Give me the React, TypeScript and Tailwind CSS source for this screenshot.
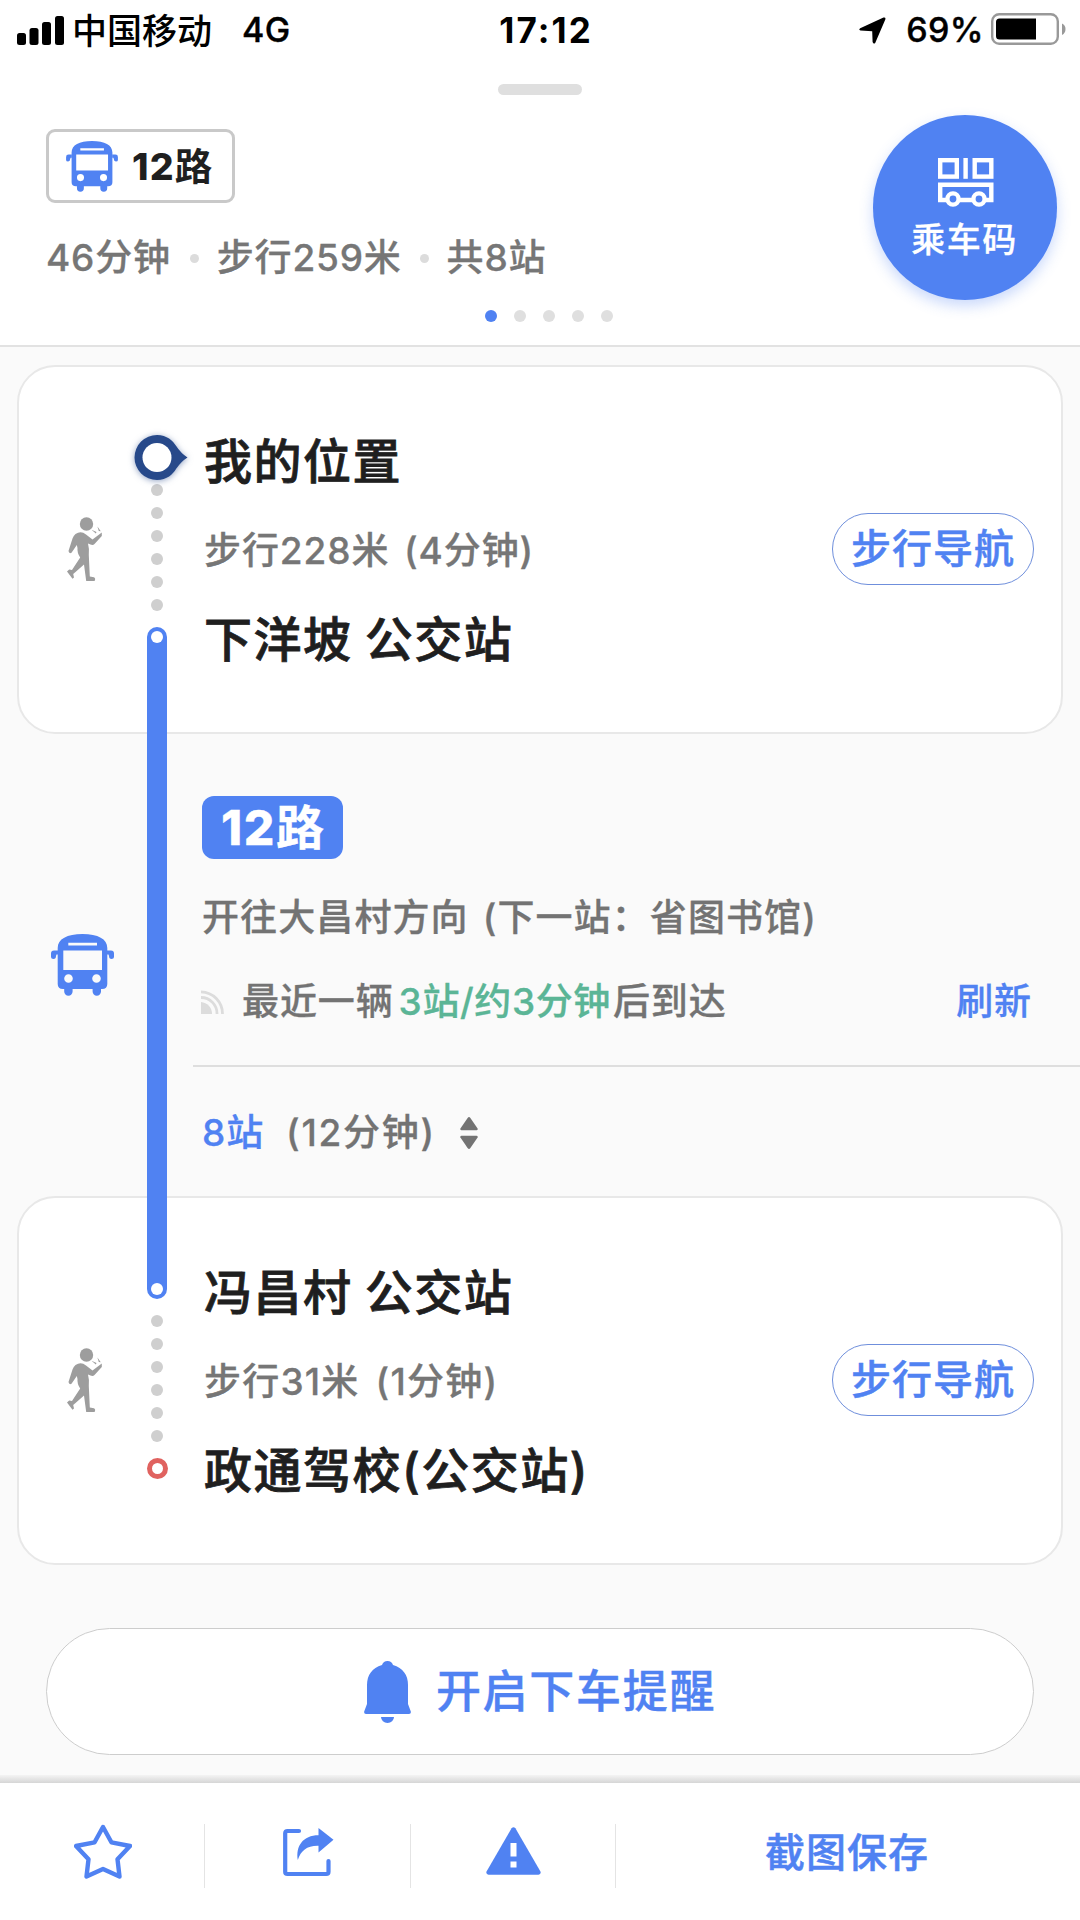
import { clsx } from "clsx";

function BusIcon({ className }: { className?: string }) {
  return (
    <svg viewBox="0 0 63 62" className={clsx("shrink-0 fill-[#5082f2]", className)}>
      <path
        fillRule="evenodd"
        d="M6.7 14 C6.7 5 16 0 31.5 0 C47 0 56.3 5 56.3 14 V50 Q56.3 55 51 55 H50 V57.5 A4.2 4.2 0 0 1 41.6 57.5 V55 H21.6 V57.5 A4.2 4.2 0 0 1 13.2 57.5 V55 H12 Q6.7 55 6.7 50 Z M17.3 8.8 V11.6 H46 V8.8 Z M12.3 16.5 V36 H51 V16.5 Z M17.5 40.2 A4.3 4.3 0 1 0 17.5 48.8 A4.3 4.3 0 1 0 17.5 40.2 Z M45.5 40.2 A4.3 4.3 0 1 0 45.5 48.8 A4.3 4.3 0 1 0 45.5 40.2 Z"
      />
      <path d="M7 16.5 H3 Q0 16.5 0 19.5 V23 Q0 25 2.5 25 Q5 25 5 22 L5.5 20.5 H7 Z" />
      <path d="M56 16.5 H60 Q63 16.5 63 19.5 V23 Q63 25 60.5 25 Q58 25 58 22 L57.5 20.5 H56 Z" />
    </svg>
  );
}

function WalkIcon() {
  return (
    <svg viewBox="0 0 36 65" className="w-9 h-[65px] mt-[150px] ml-12 shrink-0 fill-[#9d9d9d]">
      <circle cx="19.5" cy="7" r="6.7" />
      <path d="M8.5 17 Q14 13.5 19 17.5 L25.5 22.5 L34.8 15.5 V19 L27.5 27 Q26 28.5 23.5 27.5 L21 26.5 Q22.5 32 21.8 38 L22.8 59.5 L27 60.2 Q29 61.5 27.5 64 H19.2 L17 47.5 L8.5 55 L6.2 57 L7 60.5 L5.5 61.8 L0 54.5 L2.2 52.5 L5 53 L13.2 40.5 Q10 36 10.5 31 L9.8 28 L4.5 35.8 Q2 37 1.5 34 L5.5 21.5 Q6.5 18.5 8.5 17 Z" />
      <path d="M24.5 12.8 L29.5 15 L28.8 16.4 Z M30.4 9.4 L33.8 14.2 L31.8 14 Z" />
    </svg>
  );
}

function StatusBar() {
  return (
    <div className="h-[60px] flex items-center justify-between relative text-black text-[34px] leading-[60px]">
      <div className="flex items-center pl-[17px]">
        <svg viewBox="0 0 47 29" className="w-[47px] h-[29px]">
          <rect x="0" y="17" width="9" height="12" rx="2.5" />
          <rect x="12.5" y="12" width="9" height="17" rx="2.5" />
          <rect x="25" y="6" width="9" height="23" rx="2.5" />
          <rect x="38" y="0" width="9" height="29" rx="2.5" />
        </svg>
        <span className="ml-2 text-[35px] font-medium mt-px">中国移动</span>
        <span className="ml-[30px] font-medium tracking-[0.4px] [-webkit-text-stroke:0.4px]">4G</span>
      </div>
      <span className="absolute left-1/2 -translate-x-1/2 ml-[6px] text-[35px] font-bold tracking-[2.1px]">
        17:12
      </span>
      <div className="flex items-center pr-[13px]">
        <svg viewBox="0 0 27 27" className="w-[27px] h-[27px]">
          <path d="M1.2 11.2 L24.5 0.5 Q27 0 26.3 2.5 L16.2 26 Q14.5 27.5 13.6 25 L13.2 14.2 L1.5 13.6 Q-0.8 12.6 1.2 11.2 Z" />
        </svg>
        <span className="ml-5 font-medium tracking-[0.4px] [-webkit-text-stroke:0.4px]">69%</span>
        <svg viewBox="0 0 76 32" className="w-[76px] h-8 ml-[7px] -mt-0.5">
          <rect x="1.2" y="1.2" width="65.6" height="29.6" rx="7" fill="none" stroke="#999" strokeWidth="2.4" />
          <path d="M8.5 5.5 H45 V26.5 H8.5 Q5 26.5 5 23 V9 Q5 5.5 8.5 5.5 Z" />
          <path d="M71 10.5 Q74.5 12 74.5 16 Q74.5 20 71 22 Z" fill="#999" />
        </svg>
      </div>
    </div>
  );
}

function RideCode() {
  return (
    <button className="w-[184px] h-[185px] mr-[23px] rounded-full bg-[#5082f2] shadow-[0_6px_14px_rgba(80,130,242,0.3)] flex flex-col items-center">
      <svg
        viewBox="0 0 56 50"
        className="w-14 h-[50px] mt-[43px] ml-0.5"
        fill="none"
        stroke="white"
        strokeWidth="4.4"
      >
        <rect x="2.2" y="2.2" width="16.6" height="16.4" />
        <path d="M27.6 0 V20.8" />
        <rect x="36.7" y="2.2" width="16.6" height="16.4" />
        <path d="M8 42 H2.2 V26.7 H53.3 V42 H48 M22 42 H34" />
        <circle cx="15" cy="41" r="5.6" />
        <circle cx="41" cy="41" r="5.6" />
      </svg>
      <span className="text-[34px] leading-10 tracking-[1.5px] text-white font-medium mt-3 mr-px [-webkit-text-stroke:0.3px]">
        乘车码
      </span>
    </button>
  );
}

function Header() {
  return (
    <header className="bg-white border-b-2 border-[#e2e2e2] h-[347px] shrink-0 flex flex-col">
      <StatusBar />
      <div className="w-[84px] h-[11px] rounded-full bg-[#dfdfdf] mt-6 mx-auto" />
      <div className="flex justify-between items-start mt-5 pl-[46px]">
        <div className="pt-[14px]">
          <div className="w-[189px] h-[74px] border-3 border-[#c9c9c9] rounded-[9px] flex items-center pl-[17px]">
            <BusIcon className="w-[52px] h-[51px]" />
            <span className="ml-[14px] mt-0.5 text-[37.5px] leading-[50px] tracking-[1.1px] font-extrabold text-[#1f1f1f]">
              12<span className="font-bold">路</span>
            </span>
          </div>
          <div className="mt-[35px] h-10 flex items-center text-[37px] leading-10 tracking-[0.8px] font-medium text-[#767676] [-webkit-text-stroke:0.3px]">
            <span>46分钟</span>
            <i className="w-[9px] h-[9px] rounded-full bg-[#dcdcdc] ml-[19px] mr-[18px]" />
            <span>步行259米</span>
            <i className="w-[9px] h-[9px] rounded-full bg-[#dcdcdc] ml-[18px] mr-[18px]" />
            <span>共8站</span>
          </div>
        </div>
        <RideCode />
      </div>
      <div className="flex gap-[17px] mt-[10px] pl-[485px]">
        {[0, 1, 2, 3, 4].map((i) => (
          <i
            key={i}
            className={clsx("w-3 h-3 rounded-full", i === 0 ? "bg-[#5082f2]" : "bg-[#dfdfdf]")}
          />
        ))}
      </div>
    </header>
  );
}

type WalkCardProps = {
  from: string;
  walk: string;
  to: string;
  start?: boolean;
  end?: boolean;
};

function WalkCard({ from, walk, to, start, end }: WalkCardProps) {
  return (
    <section className="mx-[17px] h-[369px] bg-white border-2 border-[#e8e8e8] rounded-[38px] flex items-start">
      <WalkIcon />
      <div className="w-11 ml-8 mt-[66px] flex flex-col items-center">
        <div className="w-11 h-12">
          {start && (
            <svg
              viewBox="0 0 54 48"
              className="w-[54px] h-12 max-w-none overflow-visible drop-shadow-[0_1px_3px_rgba(38,72,138,0.5)]"
            >
              <path
                d="M22 2 C32 2 38 8 41 12.8 Q46 20.5 52.5 24.5 Q46 28.5 41 36 C38 41 32 47 22 47 A22.5 22.5 0 0 1 22 2 Z"
                fill="#27498a"
              />
              <circle cx="22" cy="24.5" r="14.5" fill="white" />
            </svg>
          )}
        </div>
        <div className="flex flex-col gap-[11px] mt-[3px]">
          {[0, 1, 2, 3, 4, 5].map((i) => (
            <i key={i} className="w-3 h-3 rounded-full bg-[#cfcfcf]" />
          ))}
        </div>
        {end && (
          <i className="w-[21px] h-[21px] mt-4 rounded-full border-5 border-[#e0625f]" />
        )}
      </div>
      <div className="ml-[25px] mt-[65px] flex-1">
        <h2 className="text-[48px] leading-[60px] tracking-[1.5px] [word-spacing:-2px] font-medium text-[#1f1f1f] [-webkit-text-stroke:0.8px]">
          {from}
        </h2>
        <p
          className={clsx(
            "mt-[35px] text-[37px] leading-[48px] font-medium text-[#767676] [-webkit-text-stroke:0.3px]",
            end ? "tracking-[1.2px] [word-spacing:5px]" : "tracking-[0.9px] [word-spacing:4px]"
          )}
        >
          {walk}
        </p>
        <h2 className="mt-[35px] text-[48px] leading-[60px] tracking-[1.5px] [word-spacing:-2px] font-medium text-[#1f1f1f] [-webkit-text-stroke:0.8px]">
          {to}
        </h2>
      </div>
      <button className="w-[202px] h-[72px] mt-[146px] mr-[27px] rounded-full border-[1.5px] border-[#6f8fdc] text-[#5082f2] text-[40px] leading-[68px] tracking-[1px] font-medium [-webkit-text-stroke:0.5px]">
        步行导航
      </button>
    </section>
  );
}

function RideSection() {
  return (
    <section className="h-[462px] flex items-start text-[37px] leading-[48px] tracking-[0.9px] font-medium text-[#737373] [-webkit-text-stroke:0.3px]">
      <BusIcon className="w-[63px] h-[62px] ml-[51px] mt-[200px]" />
      <div className="ml-[79px] flex-1">
        <div className="flex flex-col pl-[9px]">
          <div className="w-[141px] h-[63px] mt-[62px] rounded-[12px] bg-[#5082f2] text-white text-[48px] leading-[63px] tracking-[1.6px] font-extrabold text-center">
            12<span className="font-bold tracking-normal">路</span>
          </div>
          <p className="mt-[35px] [word-spacing:3px] tracking-[1.1px]">
            开往大昌村方向 (下一站：省图书馆)
          </p>
          <div className="mt-[36px] flex items-center justify-between pr-[48px]">
            <div className="flex items-center">
              <svg
                viewBox="0 0 24 24"
                className="w-6 h-6 -ml-0.5 mr-[18px]"
                fill="none"
                stroke="#dcdcdc"
                strokeWidth="2.8"
              >
                <path d="M1 24 V12 A12 12 0 0 1 12 24 Z" fill="#dcdcdc" stroke="none" />
                <path d="M1 7.5 A16 16 0 0 1 17 24" />
                <path d="M1 1.8 A22 22 0 0 1 22.5 24" />
              </svg>
              <span>最近一辆</span>
              <span className="ml-[5px] mr-0.5 tracking-[0.6px] text-[#5bb596]">3站/约3分钟</span>
              <span>后到达</span>
            </div>
            <button className="text-[#5082f2]">刷新</button>
          </div>
        </div>
        <div className="h-0.5 bg-[#dedede] mt-[39px]" />
        <div className="mt-[42px] pl-[9px] flex items-center">
          <span className="text-[#5082f2]">8站</span>
          <span className="ml-[22px] tracking-[1.7px]">(12分钟)</span>
          <svg viewBox="0 0 18 32" className="w-[18px] h-8 ml-6 fill-[#737373]">
            <path d="M7.6 1 Q9 -0.8 10.4 1 L17.6 11.5 Q18 13.3 16.5 13.3 H1.5 Q0 13.3 0.4 11.5 Z" />
            <path d="M7.6 31 Q9 32.8 10.4 31 L17.6 20.5 Q18 18.7 16.5 18.7 H1.5 Q0 18.7 0.4 20.5 Z" />
          </svg>
        </div>
      </div>
    </section>
  );
}

function BottomBar() {
  return (
    <footer className="flex-1 bg-white flex items-start pt-[41px]">
      <button className="w-[205px] h-16 border-r-[1.5px] border-[#e4e4e4] flex justify-center">
        <svg
          viewBox="0 0 58 55"
          className="w-[58px] h-[55px] ml-px"
          fill="none"
          stroke="#5082f2"
          strokeWidth="4.4"
          strokeLinejoin="round"
        >
          <path d="M29 3 L37.4 18.3 L56 22 L43.5 35.3 L45.5 52.5 L29 45 L12.5 52.5 L14.5 35.3 L2 22 L20.6 18.3 Z" />
        </svg>
      </button>
      <button className="w-[206px] h-16 border-r-[1.5px] border-[#e4e4e4] flex justify-center">
        <svg viewBox="0 0 51 50" className="w-[51px] h-[50px] mt-[3px] ml-0.5">
          <path
            d="M16 4 H4.5 Q2.2 4 2.2 6.3 V44.7 Q2.2 47 4.5 47 H43.2 Q45.5 47 45.5 44.7 V34"
            fill="none"
            stroke="#5082f2"
            strokeWidth="4.2"
            strokeLinecap="round"
          />
          <path
            d="M35.5 1 L50.5 12.7 L35.5 25.5 V18.8 C24 18.5 18 23.5 14.8 33 C12.5 19 20 8.2 35.5 8.2 Z"
            fill="#5082f2"
          />
        </svg>
      </button>
      <button className="w-[205px] h-16 border-r-[1.5px] border-[#e4e4e4] flex justify-center">
        <svg viewBox="0 0 55 48" className="w-[55px] h-12 mt-[3px]">
          <path
            d="M25.6 1.2 Q27.5 -0.8 29.4 1.2 L54.6 44.8 Q55 47.7 52.5 47.7 H2.5 Q0 47.7 0.4 44.8 Z"
            fill="#5082f2"
          />
          <path d="M24.5 16 H30.5 V29.5 H24.5 Z M24.5 34.5 H30.5 V40.5 H24.5 Z" fill="white" />
        </svg>
      </button>
      <button className="flex-1 h-16 pb-[6px] pr-0.5 text-[40px] leading-[56px] tracking-[1px] font-medium text-[#5082f2] [-webkit-text-stroke:0.5px]">
        截图保存
      </button>
    </footer>
  );
}

export default function App() {
  return (
    <div className="w-[1080px] h-[1920px] overflow-hidden bg-[#fafafa] flex flex-col font-['Inter','Noto_Sans_CJK_SC',sans-serif]">
      <Header />
      <main className="relative h-[1428px] shrink-0 pt-[18px]">
        <WalkCard from="我的位置" walk="步行228米 (4分钟)" to="下洋坡 公交站" start />
        <RideSection />
        <WalkCard from="冯昌村 公交站" walk="步行31米 (1分钟)" to="政通驾校(公交站)" end />

        {/* Route line, runs over both cards */}
        <div className="absolute left-[147px] top-[280px] w-5 h-[672px] rounded-full bg-[#5082f2] flex flex-col justify-between items-center py-1">
          <i className="w-3 h-3 rounded-full bg-white" />
          <i className="w-3 h-3 rounded-full bg-white" />
        </div>

        <button className="mx-[46px] w-[988px] h-[127px] mt-[63px] rounded-full border-[1.5px] border-[#cdcdcd] bg-white flex items-center justify-center">
          <svg viewBox="0 0 47 62" className="w-[47px] h-[62px] fill-[#5082f2]">
            <path d="M18 4 A5.8 5.8 0 0 1 29 4 C39 7 44 14 44 24 V43 L46.8 50.5 Q47.3 53 45 53 H2 Q-0.3 53 0.2 50.5 L3 43 V24 C3 14 8 7 18 4 Z" />
            <path d="M17 56 H30 A6.5 6 0 0 1 17 56 Z" />
          </svg>
          <span className="ml-[25px] text-[45px] leading-[60px] tracking-[1.7px] font-medium text-[#5082f2] [-webkit-text-stroke:0.4px]">
            开启下车提醒
          </span>
        </button>
      </main>
      <div className="h-2 shrink-0 bg-linear-to-b from-[#f4f4f4] to-[#d6d6d6]" />
      <BottomBar />
    </div>
  );
}
